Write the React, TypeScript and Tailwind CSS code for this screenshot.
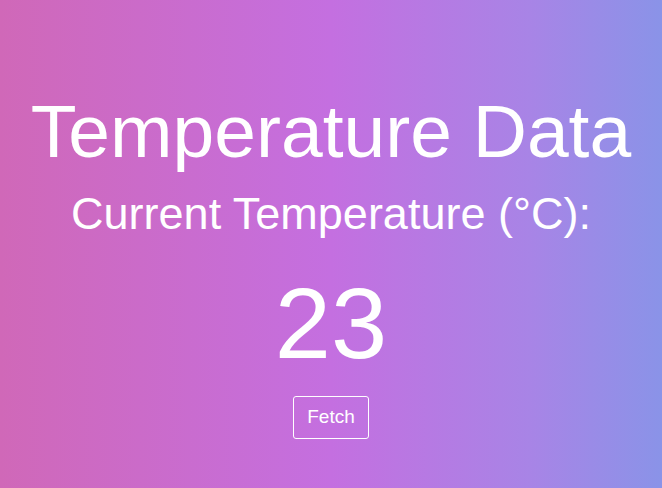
import React from 'react';

export default function App() {
  return (
    <div
      className="w-full h-screen flex flex-col items-center text-white bg-[linear-gradient(to_right,#d068b8,#c46fe0_50%,#a884e6_80%,#8a93e8)]"
      style={{ fontFamily: '"Liberation Sans", Arial, sans-serif' }}
    >
      <h1 className="mt-[94px] text-[75px] leading-none font-normal">Temperature Data</h1>
      <h2 className="mt-[22px] text-[45px] leading-none font-normal">Current Temperature (°C):</h2>
      <div className="mt-[37px] text-[101px] leading-none">23</div>
      <button className="mt-[22px] w-[76px] h-[43px] border border-white rounded-[3px] text-[19px] text-white bg-transparent">
        Fetch
      </button>
    </div>
  );
}
